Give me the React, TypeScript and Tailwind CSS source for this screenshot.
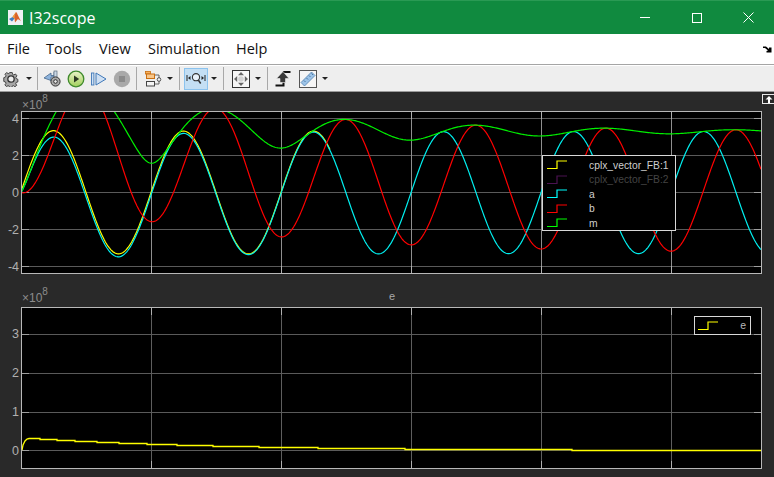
import type { ReactNode } from "react";

const W = (2 * Math.PI) / 130;

const sigA = (t: number) => 3.3 * Math.sin(W * t) - 0.4 * Math.exp(-t / 120) * (1 - Math.exp(-t / 6));
const sigY = (t: number) => 3.32 * Math.sin(W * t) + 0.05 * Math.exp(-t / 40);
const sigB = (t: number) => -3.3 * Math.cos(W * t) + 3.3 * Math.exp(-t / 200);
const sigM = (t: number) => Math.hypot(sigA(t), sigB(t));

function trace(fn: (t: number) => number, end = 761) {
  let d = "";
  for (let x = 21; x <= end; x += 1) {
    const y = 192.5 - fn(x - 21) * 18.5;
    d += `${x === 21 ? "M" : "L"}${x} ${y.toFixed(2)}`;
  }
  return d;
}

// stepped error trace, read off the screenshot
const errPath =
  "M22 450L23 445L25 441L27 439L29 438.5L40 438.5L40 439.5L57 439.5L57 440.5L75 440.5L75 441.5L97 441.5L97 442.5L119 442.5L119 443.5L147 443.5L147 444.5L177 444.5L177 445.5L213 445.5L213 446.5L259 446.5L259 447.5L318 447.5L318 448.5L405 448.5L405 449.5L572 449.5L572 450.5L761 450.5";

const V_GRID = [151, 281, 411, 541, 671];

function Caret() {
  return <span className="block w-0 h-0 border-x-[3px] border-x-transparent border-t-[3px] border-t-[#222]" />;
}

function Sep() {
  return <span className="block w-px h-[23px] bg-[#a8a8a8]" />;
}

function Btn({ children, w = "w-[23px]" }: { children: ReactNode; w?: string }) {
  return <span className={`flex items-center justify-center h-[22px] ${w}`}>{children}</span>;
}

function GearIcon({ size = 16 }: { size?: number }) {
  return (
    <svg width={size} height={size} viewBox="0 0 16 16">
      <path
        d="M6.6 1h2.8l.4 2 1.3.6 1.8-1 1.6 2-1.2 1.6.3 1.4 1.9.8v2.8l-1.9.6-.4 1.4 1.1 1.7-2 1.6-1.6-1.2-1.4.5-.4 2.1H6.6l-.4-2-1.3-.6-1.8 1-1.7-1.9 1.2-1.7-.5-1.4-1.9-.6V6.6l1.9-.7.5-1.4-1.2-1.6 2-1.8 1.6 1.1 1.3-.5z"
        fill="#a6a6a6"
        stroke="#3c3c3c"
        strokeWidth="1"
        transform="translate(0.6 0.6) scale(0.92)"
      />
      <circle cx="8" cy="8" r="3.2" fill="#eee" stroke="#333" strokeWidth="1.3" />
    </svg>
  );
}

function ScopeParamsIcon() {
  return (
    <svg width="20" height="18" viewBox="0 0 20 18">
      <path d="M1 8l7-5v2.5h3V2h2v5H8v3.5z" fill="#8fb4dc" stroke="#44668c" strokeWidth="0.8" />
      <rect x="11" y="1" width="3" height="7" fill="#c9d7e6" stroke="#5a6b7c" strokeWidth="0.7" />
      <circle cx="12.5" cy="11.5" r="4.6" fill="#a8a8a8" stroke="#333" strokeWidth="1" />
      <circle cx="12.5" cy="11.5" r="1.8" fill="#eee" stroke="#222" strokeWidth="0.9" />
    </svg>
  );
}

function PlayIcon() {
  return (
    <svg width="18" height="18" viewBox="0 0 18 18">
      <defs>
        <linearGradient id="playG" x1="0" y1="0" x2="0" y2="1">
          <stop offset="0" stopColor="#e8f4c8" />
          <stop offset="1" stopColor="#a2cf5c" />
        </linearGradient>
      </defs>
      <circle cx="9" cy="9" r="7.8" fill="url(#playG)" stroke="#3f8a2c" strokeWidth="1.3" />
      <path d="M7 5.4l5.2 3.6L7 12.6z" fill="#2c3a22" />
    </svg>
  );
}

function StepIcon() {
  return (
    <svg width="18" height="16" viewBox="0 0 18 16">
      <rect x="1.5" y="2" width="2.4" height="12" fill="#cfe0f3" stroke="#3f78b8" strokeWidth="0.9" />
      <path d="M6 2v12l10-6z" fill="#cfe0f3" stroke="#3f78b8" strokeWidth="1" />
    </svg>
  );
}

function StopIcon() {
  return (
    <svg width="18" height="18" viewBox="0 0 18 18">
      <circle cx="9" cy="9" r="8.2" fill="#a9a9a9" />
      <rect x="6" y="6" width="6" height="6" fill="#8b8b8b" />
    </svg>
  );
}

function BlockIcon() {
  return (
    <svg width="20" height="18" viewBox="0 0 20 18">
      <path d="M12 5h4v3M11 14h5v-3" fill="none" stroke="#555" strokeWidth="0.9" />
      <rect x="2.500" y="1.500" width="5" height="2.500" fill="#f7b260" stroke="#c96f12" strokeWidth="0.8" />
      <rect x="3.500" y="4" width="8" height="4.500" fill="#f7c78c" stroke="#c96f12" strokeWidth="1" />
      <rect x="3.500" y="11.500" width="8" height="4.500" fill="#f4f4f4" stroke="#444" strokeWidth="1" />
      <circle cx="16" cy="9.500" r="1.800" fill="#f4f4f4" stroke="#444" strokeWidth="0.9" />
    </svg>
  );
}

function ZoomIcon() {
  return (
    <svg width="20" height="14" viewBox="0 0 20 14">
      <path d="M1 3v6M19 3v6" stroke="#222" strokeWidth="1" />
      <path d="M2 6l2.500-2v4zM18 6l-2.500-2v4z" fill="#222" />
      <circle cx="10" cy="5.200" r="3.600" fill="#e9f2fa" stroke="#333" strokeWidth="1.100" />
      <path d="M12.300 8l2.400 3.500" stroke="#333" strokeWidth="1.500" />
    </svg>
  );
}

function FitIcon() {
  return (
    <svg width="18" height="18" viewBox="0 0 18 18">
      <rect x="0.500" y="0.500" width="17" height="17" fill="#f6f6f6" stroke="#333" />
      <path d="M9 2l3 3.200H6zM9 16l3-3.200H6zM2 9l3.200-3v6zM16 9l-3.200-3v6z" fill="#666" />
      <circle cx="9" cy="9" r="2.800" fill="#d2d2d2" />
    </svg>
  );
}

function StairIcon() {
  return (
    <svg width="18" height="18" viewBox="0 0 18 18">
      <path d="M1.500 15.500H9.500V11" fill="none" stroke="#111" strokeWidth="2" />
      <path d="M9 2H16.500" fill="none" stroke="#111" strokeWidth="2" />
      <path d="M9 1.500L2.500 8.500H6V12.500H11.500V8.500H15z" fill="#3a3a3a" stroke="#eee" strokeWidth="0.6" />
    </svg>
  );
}

function RulerIcon() {
  return (
    <svg width="18" height="18" viewBox="0 0 18 18">
      <rect x="0.500" y="0.500" width="17" height="17" fill="#f6f6f6" stroke="#555" />
      <path d="M2 12.500L12.500 2l3.500 3.500L5.500 16z" fill="#9cc3e8" stroke="#4f7fae" strokeWidth="0.8" />
      <path d="M5 10.500l1.500 1.500M7.500 8l1.500 1.500M10 5.500l1.500 1.500M12.500 3.500l1.500 1.500" stroke="#36648f" strokeWidth="0.8" />
    </svg>
  );
}

function MatlabIcon() {
  return (
    <svg width="15" height="15" viewBox="0 0 15 15">
      <rect width="15" height="15" fill="#eef1f4" />
      <path d="M1 9l3.500-2 2 1.500L4 11.500z" fill="#3f7fc0" />
      <path d="M4.500 7l3.500-5c1 0 2 4 5 9-2-1-2.500-2-3.500-1.500L7 12.500 6.500 8.500z" fill="#d9622b" />
      <path d="M8 2c-.8 2-1.500 4-1.500 6.500L4.500 7z" fill="#f0a13c" />
    </svg>
  );
}

function LegendSample({ color }: { color: string }) {
  return (
    <svg width="20" height="10" viewBox="0 0 20 10" className="shrink-0">
      <path d="M0 8.500H10V1H20" fill="none" stroke={color} strokeWidth="1.200" />
    </svg>
  );
}

function AxesGrid({ top, bottom, hLines, vColor }: { top: number; bottom: number; hLines: number[]; vColor: string }) {
  return (
    <g shapeRendering="crispEdges" strokeWidth="1">
      {hLines.map((y) => (
        <g key={y}>
          <path d={`M22 ${y + 0.5}H761`} stroke="#5a5a5a" />
          <path d={`M22 ${y + 0.5}H29M754 ${y + 0.5}H761`} stroke="#a0a0a0" />
        </g>
      ))}
      {V_GRID.map((x) => (
        <g key={x}>
          <path d={`M${x + 0.5} ${top}V${bottom}`} stroke={vColor} />
          <path d={`M${x + 0.5} ${top}V${top + 7}M${x + 0.5} ${bottom - 7}V${bottom}`} stroke="#b0b0b0" />
        </g>
      ))}
    </g>
  );
}

function ScaleLabel() {
  return (
    <span className="text-[#8c8c8c] text-[12px] leading-none">
      ×10<sup className="text-[10px] align-[2px] leading-none">8</sup>
    </span>
  );
}

function TickColumn({ labels, className }: { labels: string[]; className: string }) {
  return (
    <div className={`w-[21px] shrink-0 flex flex-col items-end pr-[2px] text-[12.500px] text-[#b0b0b0] ${className}`}>
      {labels.map((l) => (
        <span key={l} className="h-[14px] leading-[14px]">
          {l}
        </span>
      ))}
    </div>
  );
}

const LEGEND = [
  { label: "cplx_vector_FB:1", color: "#ffff00", text: "text-[#cfcfcf]" },
  { label: "cplx_vector_FB:2", color: "#4b1250", text: "text-[#444444]" },
  { label: "a", color: "#00ffff", text: "text-[#cfcfcf]" },
  { label: "b", color: "#ff0000", text: "text-[#cfcfcf]" },
  { label: "m", color: "#00ff00", text: "text-[#cfcfcf]" },
];

export default function App() {
  return (
    <div className="w-[774px] h-[477px] flex flex-col overflow-hidden bg-[#292929] font-['Liberation_Sans',Arial,sans-serif]">
      {/* title bar */}
      <div className="h-[34px] shrink-0 flex items-center bg-[#108a3f] border-t border-t-[#2a9a54] text-white">
        <span className="ml-[8px]">
          <MatlabIcon />
        </span>
        <span className="ml-[6px] text-[16px] font-['Open_Sans',sans-serif]">I32scope</span>
        <div className="ml-auto flex items-center">
          <span className="w-[52px] flex justify-center">
            <span className="block w-[10px] h-px bg-white" />
          </span>
          <span className="w-[52px] flex justify-center">
            <span className="block w-[10px] h-[10px] border border-white" />
          </span>
          <span className="w-[52px] mr-[-1px] flex justify-center pr-[2px]">
            <svg width="11" height="11" viewBox="0 0 11 11">
              <path d="M0.500 0.500L10.500 10.500M10.500 0.500L0.500 10.500" stroke="#fff" strokeWidth="1" />
            </svg>
          </span>
        </div>
      </div>

      {/* menu bar */}
      <div className="h-[31px] shrink-0 flex items-center bg-white border-b border-b-[#a5a5a5] pl-[7px] text-[14.500px] text-[#111] font-['Open_Sans',sans-serif]">
        <span className="w-[39px]">File</span>
        <span className="w-[53px]">Tools</span>
        <span className="w-[49px]">View</span>
        <span className="w-[88px]">Simulation</span>
        <span>Help</span>
        <svg width="9" height="7" viewBox="0 0 9 7" className="ml-auto mr-[2px]">
          <path d="M0 0.500H3L6 3V1.500H8.500V6.500H3.500V5L5 4.500 2 2H0z" fill="#000" />
        </svg>
      </div>

      {/* toolbar */}
      <div className="h-[27px] shrink-0 flex items-center bg-[#eeeeee] border-t border-t-white border-b border-b-[#9a9a9a] pl-[2px]">
        <Btn w="w-[18px]">
          <GearIcon />
        </Btn>
        <Btn w="w-[17px]">
          <Caret />
        </Btn>
        <Sep />
        <span className="ml-[3px]" />
        <Btn>
          <ScopeParamsIcon />
        </Btn>
        <Btn>
          <PlayIcon />
        </Btn>
        <Btn>
          <StepIcon />
        </Btn>
        <Btn>
          <StopIcon />
        </Btn>
        <span className="ml-[3px]" />
        <Sep />
        <span className="ml-[4px]" />
        <Btn>
          <BlockIcon />
        </Btn>
        <Btn w="w-[12px]">
          <Caret />
        </Btn>
        <span className="ml-[3px]" />
        <Sep />
        <span className="ml-[4px]" />
        <span className="flex items-center justify-center w-[24px] h-[22px] bg-[#c4dff4] border border-[#8cc3ee]">
          <ZoomIcon />
        </span>
        <Btn w="w-[12px]">
          <Caret />
        </Btn>
        <span className="ml-[3px]" />
        <Sep />
        <span className="ml-[5px]" />
        <Btn>
          <FitIcon />
        </Btn>
        <Btn w="w-[12px]">
          <Caret />
        </Btn>
        <span className="ml-[3px]" />
        <Sep />
        <span className="ml-[3px]" />
        <Btn>
          <StairIcon />
        </Btn>
        <span className="ml-[2px]" />
        <Btn>
          <RulerIcon />
        </Btn>
        <Btn w="w-[12px]">
          <Caret />
        </Btn>
      </div>

      {/* plots */}
      <div className="relative flex-1 flex flex-col">
        <button className="absolute top-[2px] right-0 w-[12px] h-[10px] border border-[#e8e8e8] border-r-0 flex items-center justify-center">
          <svg width="8" height="7" viewBox="0 0 8 7">
            <path d="M4 0L7.500 3.500H5V7H3V3.500H0.500z" fill="#fff" />
          </svg>
        </button>

        <div className="h-[19px] pl-[22px] pt-[7px] flex items-start">
          <ScaleLabel />
        </div>
        <div className="flex">
          <TickColumn labels={["4", "2", "0", "-2", "-4"]} className="pt-[1px] gap-[23px]" />
          <div className="relative w-[741px] h-[163px] bg-black border border-[#b8b8b8]">
            <svg className="block w-full h-full" viewBox="22 112 739 161">
              <AxesGrid top={112} bottom={273} hLines={[118, 155, 192, 229, 266]} vColor="#8f8f8f" />
              <g fill="none" strokeWidth="1.200">
                <path d={trace(sigY, 330)} stroke="#ffff00" />
                <path d={trace(sigA)} stroke="#00f0f0" />
                <path d={trace(sigB)} stroke="#ff0000" />
                <path d={trace(sigM)} stroke="#00f000" />
              </g>
            </svg>
            <div className="absolute left-[520px] top-[43px] w-[134px] h-[76px] bg-black border border-[#d8d8d8] flex flex-col pt-[2px] pl-[4px] text-[10.300px]">
              {LEGEND.map((row) => (
                <div key={row.label} className="h-[14.500px] flex items-center">
                  <LegendSample color={row.color} />
                  <span className={`ml-[22px] ${row.text}`}>{row.label}</span>
                </div>
              ))}
            </div>
          </div>
        </div>

        <div className="h-[33px] pl-[22px] pb-[2px] grid grid-cols-3 w-[762px] items-end">
          <span className="leading-none">
            <ScaleLabel />
          </span>
          <span className="text-center text-[11px] text-[#a8a8a8] mb-[3px] leading-none">e</span>
        </div>
        <div className="flex">
          <TickColumn labels={["3", "2", "1", "0"]} className="pt-[20px] gap-[25px]" />
          <div className="relative w-[741px] h-[162px] bg-black border border-[#b8b8b8]">
            <svg className="block w-full h-full" viewBox="22 308 739 160">
              <AxesGrid top={308} bottom={468} hLines={[334, 373, 412, 450]} vColor="#5e5e5e" />
              <path d={errPath} fill="none" stroke="#ffff00" strokeWidth="1.300" />
            </svg>
            <div className="absolute right-[10px] top-[8px] w-[57px] h-[19px] bg-black border border-[#d8d8d8] flex items-center pl-[3px] pr-[4px] text-[10.500px] text-[#b8b8b8]">
              <LegendSample color="#ffff00" />
              <span className="ml-auto">e</span>
            </div>
          </div>
        </div>
      </div>
    </div>
  );
}
